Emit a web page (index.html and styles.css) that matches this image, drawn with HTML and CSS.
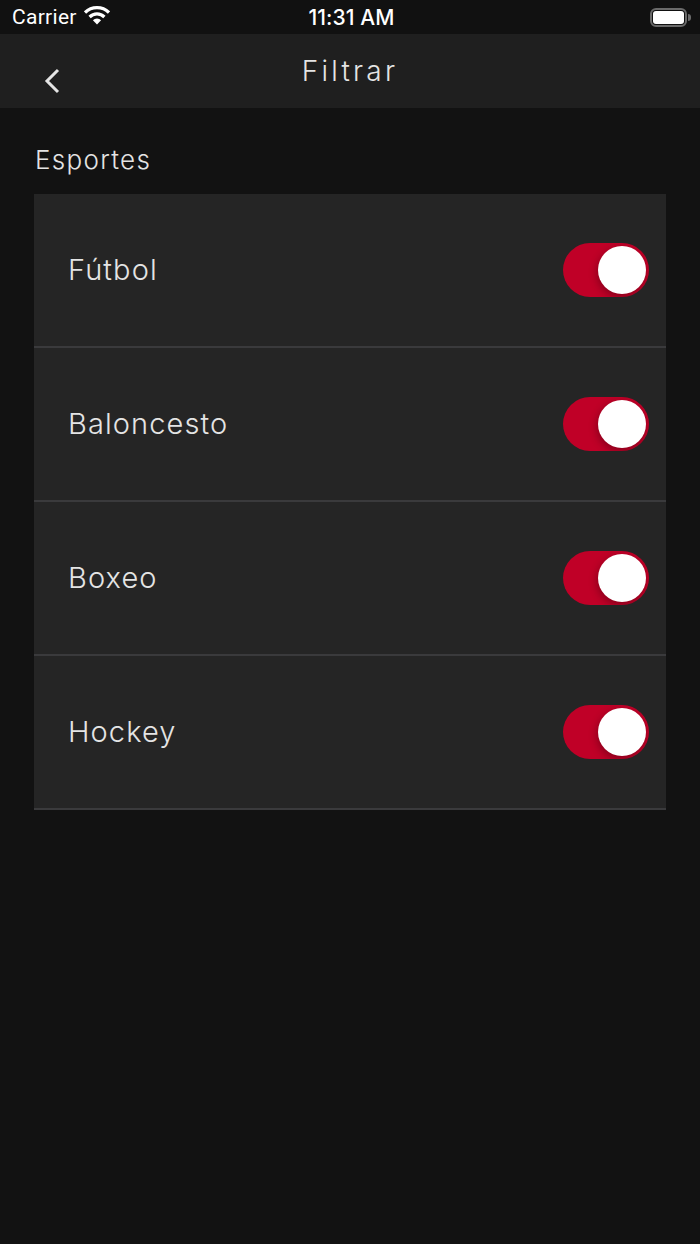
FILE: index.html
```html
<!DOCTYPE html>
<html>
<head>
  <meta charset="UTF-8" />
  <meta name="viewport" content="width=device-width, initial-scale=1.0" />
  <title>Filtrar</title>
  <link rel="stylesheet" href="styles.css">
</head>
<body>
  <div class="status-bar">
    <div class="status-left">
      <span class="carrier">Carrier</span>
      <svg class="wifi" width="26" height="19" viewBox="0 0 26 19">
        <path d="M1 6.6 A17 17 0 0 1 25 6.6" fill="none" stroke="#fff" stroke-width="3.2"/>
        <path d="M5.6 11 A10.5 10.5 0 0 1 20.4 11" fill="none" stroke="#fff" stroke-width="3.2"/>
        <path d="M13 18.5 L8.9 14.3 A5.8 5.8 0 0 1 17.1 14.3 Z" fill="#fff"/>
      </svg>
    </div>
    <div class="time">11:31 AM</div>
    <div class="battery">
      <div class="battery-body"><div class="battery-fill"></div></div>
      <div class="battery-cap"></div>
    </div>
  </div>

  <div class="nav-bar">
    <svg class="back" width="18" height="26" viewBox="0 0 18 26">
      <path d="M15 2 L4 13 L15 24" fill="none" stroke="#e4e4e4" stroke-width="3"/>
    </svg>
    <h1>Filtrar</h1>
  </div>

  <div class="content">
    <h2>Esportes</h2>
    <div class="list">
      <div class="row"><span class="row-label">Fútbol</span><div class="toggle"><div class="knob"></div></div></div>
      <div class="row"><span class="row-label">Baloncesto</span><div class="toggle"><div class="knob"></div></div></div>
      <div class="row"><span class="row-label">Boxeo</span><div class="toggle"><div class="knob"></div></div></div>
      <div class="row"><span class="row-label">Hockey</span><div class="toggle"><div class="knob"></div></div></div>
    </div>
  </div>
</body>
</html>
```

FILE: styles.css
```css
body {
  margin: 0;
  background-color: #121212;
  color: #e4e4e4;
  font-family: Inter, "Liberation Sans", sans-serif;
  font-weight: 300;
}
.status-bar {
  height: 34px;
  background-color: #111111;
  color: #ffffff;
  display: grid;
  grid-template-columns: 1fr auto 1fr;
  align-items: center;
  padding: 0 9px 0 12px;
  font-weight: 400;
  font-size: 21px;
}
.status-left {
  display: flex;
  align-items: center;
  gap: 7px;
}
.carrier {
  font-family: Roboto, "Liberation Sans", sans-serif;
  letter-spacing: 0.3px;
}
.wifi {
  margin-top: -4px;
}
.time {
  font-weight: 500;
  letter-spacing: 0.1px;
}
.battery {
  display: flex;
  align-items: center;
  justify-content: flex-end;
  gap: 1px;
}
.battery-body {
  width: 37px;
  height: 19px;
  box-sizing: border-box;
  padding: 1px;
  border: 2px solid #6a6a6a;
  border-radius: 6px;
}
.battery-fill {
  height: 100%;
  background-color: #ffffff;
  border-radius: 3px;
}
.battery-cap {
  width: 3px;
  height: 7px;
  background-color: #6a6a6a;
  border-radius: 0 3px 3px 0;
}
.nav-bar {
  height: 74px;
  background-color: #1f1f1f;
  position: relative;
  text-align: center;
}
.back {
  position: absolute;
  left: 43px;
  top: 34px;
}
.nav-bar h1 {
  margin: 0;
  padding-top: 20px;
  font-size: 28px;
  line-height: 34px;
  font-weight: 300;
  letter-spacing: 3.2px;
}
.content {
  padding: 34px 34px 0;
}
.content h2 {
  margin: 0 0 16px 1px;
  font-size: 26px;
  line-height: 36px;
  font-weight: 300;
  letter-spacing: 1.3px;
}
.list {
  background-color: #252525;
}
.row {
  height: 152px;
  border-bottom: 2px solid #3a3a3c;
  display: flex;
  align-items: center;
  justify-content: space-between;
  padding: 0 17px 0 34px;
  font-size: 29px;
  letter-spacing: 1.1px;
}
.row-label {
  margin-bottom: 2px;
}
.toggle {
  width: 86px;
  height: 54px;
  border-radius: 27px;
  background-color: #c00027;
  box-sizing: border-box;
  padding: 3px;
  display: flex;
  justify-content: flex-end;
  overflow: hidden;
}
.knob {
  width: 48px;
  height: 48px;
  border-radius: 50%;
  background-color: #ffffff;
  box-shadow: -1px 3px 8px rgba(0, 0, 0, 0.3);
}
```
